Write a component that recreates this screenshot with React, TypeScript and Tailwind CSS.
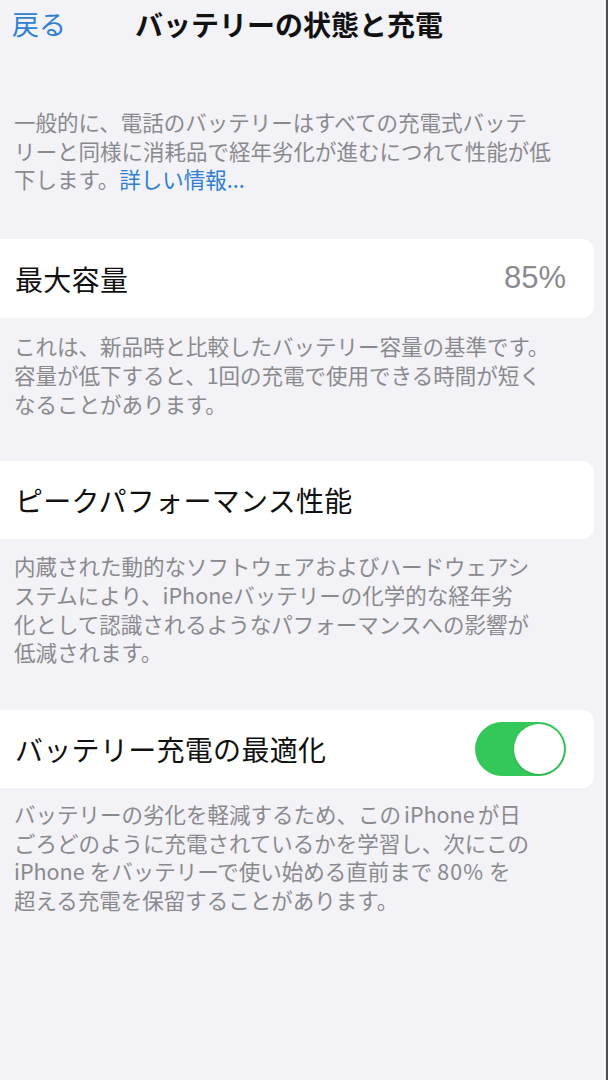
import React from 'react';

const jp = { fontFamily: '"Noto Sans CJK JP", "Noto Sans", sans-serif' };

const Note: React.FC<{ lines: React.ReactNode[]; className?: string }> = ({ lines, className = '' }) => (
  <div className={`pl-[14px] text-[21.5px] leading-[28.7px] text-[#8a8a8e] ${className}`}>
    {lines.map((line, i) => (
      <div key={i} className="whitespace-nowrap">
        {line}
      </div>
    ))}
  </div>
);

const Row: React.FC<{ title: string; children?: React.ReactNode; className?: string }> = ({
  title,
  children,
  className = '',
}) => (
  <div
    className={`h-[78px] mr-[10px] bg-white rounded-r-[12px] flex items-center justify-between pl-[15px] pr-[28px] ${className}`}
  >
    <span className="text-[28px] text-[#111] tracking-[0.3px]">{title}</span>
    {children}
  </div>
);

const Toggle: React.FC<{ on: boolean }> = ({ on }) => (
  <div
    className={`relative w-[91px] h-[54px] rounded-full ${on ? 'bg-[#34c759]' : 'bg-[#e5e5ea]'}`}
  >
    <div
      className={`absolute top-[2px] w-[50px] h-[50px] rounded-full bg-white shadow-[0_1px_2px_rgba(0,0,0,0.15)] ${
        on ? 'right-[2px]' : 'left-[2px]'
      }`}
    />
  </div>
);

export default function App() {
  return (
    <div className="flex w-[608px] h-[1080px] bg-[#f2f2f7]" style={jp}>
      <div className="flex-1 flex flex-col">
        {/* nav bar */}
        <div className="h-[48px] flex items-center pl-[12px]">
          <span className="text-[27px] text-[#2f80d1]">戻る</span>
          <span className="ml-[69px] text-[28px] font-bold text-[#111]">バッテリーの状態と充電</span>
        </div>

        <Note
          className="mt-[60px]"
          lines={[
            '一般的に、電話のバッテリーはすべての充電式バッテ',
            'リーと同様に消耗品で経年劣化が進むにつれて性能が低',
            <>
              下します。<span className="text-[#2f80d1]">詳しい情報...</span>
            </>,
          ]}
        />

        <Row title="最大容量" className="mt-[45px] h-[79px]">
          <span className="text-[31px] text-[#8a8a8e]" style={{ fontFamily: '"Liberation Sans", Arial, sans-serif' }}>
            85%
          </span>
        </Row>

        <Note
          className="mt-[14px]"
          lines={[
            'これは、新品時と比較したバッテリー容量の基準です。',
            '容量が低下すると、1回の充電で使用できる時間が短く',
            'なることがあります。',
          ]}
        />

        <Row title="ピークパフォーマンス性能" className="mt-[43px]" />

        <Note
          className="mt-[13px]"
          lines={[
            '内蔵された動的なソフトウェアおよびハードウェアシ',
            'ステムにより、iPhoneバッテリーの化学的な経年劣',
            '化として認識されるようなパフォーマンスへの影響が',
            '低減されます。',
          ]}
        />

        <Row title="バッテリー充電の最適化" className="mt-[43px]">
          <Toggle on />
        </Row>

        <Note
          className="mt-[12px]"
          lines={[
            <>
              バッテリーの劣化を軽減するため、この<span className="mx-[3px]">iPhone</span>が日
            </>,
            'ごろどのように充電されているかを学習し、次にこの',
            <>
              <span className="mr-[5px]">iPhone</span>をバッテリーで使い始める直前まで
              <span className="mx-[5px] tracking-[1px]">80%</span>を
            </>,
            '超える充電を保留することがあります。',
          ]}
        />
      </div>

      {/* window edge */}
      <div className="w-[1px] bg-white" />
      <div className="w-[1px] bg-[#e9e9ee]" />
      <div className="w-[2px] bg-[#4d4d4d]" />
    </div>
  );
}
